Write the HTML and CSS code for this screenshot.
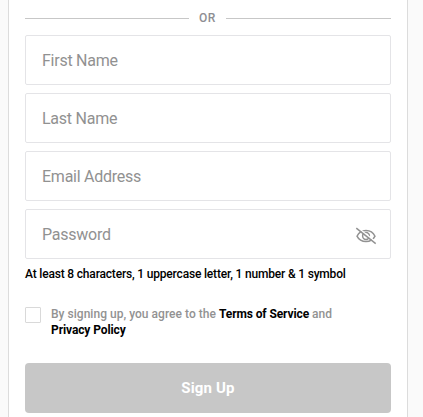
FILE: index.html
```
<!DOCTYPE html>
<html lang="en">
    <head>
        <meta charset="utf-8">
        <title>Sign Up</title>
        <link rel="stylesheet" href="styles.css">
    </head>
    <body>
        <form class="signup" onsubmit="return false">
            <div class="divider"><span class="or">OR</span></div>
            <div class="fields">
                <input class="field first" type="text" name="firstname" placeholder="First Name">
                <input class="field last" type="text" name="lastname" placeholder="Last Name">
                <input class="field email" type="email" name="email" placeholder="Email Address">
                <div class="field password">
                    <input class="password-input" type="password" name="password" placeholder="Password">
                    <svg class="eye" width="22" height="18" viewBox="0 0 22 18">
                        <path class="lid" d="M2 9.2C5.6 1.6 16.4 1.6 20 9.2C16.4 16.4 5.6 16.4 2 9.2Z"/>
                        <circle class="lid" cx="11" cy="9" r="3.4"/>
                        <path class="gap" d="M2.3 0.4L21.4 15.4"/>
                        <path class="slash" d="M1.3 1.2L20.7 16.6"/>
                    </svg>
                </div>
            </div>
            <p class="hint">At least 8 characters, 1 uppercase letter, 1 number &amp; 1 symbol</p>
            <div class="terms">
                <input class="checkbox" id="agree" type="checkbox" name="agree">
                <label class="agree" for="agree"><span class="agree-text">By signing up, you agree to the</span> <a class="tos">Terms of Service</a> <span class="and">and</span><br><a class="privacy">Privacy Policy</a></label>
            </div>
            <button class="submit"><span class="submit-text">Sign Up</span></button>
        </form>
    </body>
</html>
```
FILE: styles.css
```
*{
    box-sizing: border-box;
}
body{
    margin: 0;
    background: #fafafa;
    font-family: Roboto, "Liberation Sans", sans-serif;
    overflow: hidden;
}
.signup{
    width: 400px;
    height: 417px;
    margin-left: 8px;
    padding: 10px 16px 0;
    background: white;
    border: 1px solid #dcdcdc;
    border-top: 0;
    border-bottom: 0;
}
.divider{
    display: flex;
    align-items: center;
    gap: 10px;
    height: 16px;
    color: #8e8e93;
    font-size: 12px;
    font-weight: 500;
    line-height: 16px;
}
.or{
    letter-spacing: 0.6px;
}
.divider:before, .divider:after{
    content: "";
    flex: 1;
    height: 1px;
    background: #c7c7c7;
}
.divider:after{
    flex: 0 0 165px;
}
.fields{
    display: flex;
    flex-direction: column;
    gap: 8px;
    margin-top: 9px;
}
.field{
    width: 100%;
    height: 50px;
    padding: 0 16px;
    background: white;
    border: 1px solid #e4e4e7;
    border-radius: 2px;
    font: 16px Roboto, "Liberation Sans", sans-serif;
    letter-spacing: -0.25px;
    outline: 0;
}
.password{
    display: flex;
    align-items: center;
    justify-content: space-between;
    padding-right: 13px;
}
.password-input{
    width: 200px;
    height: 48px;
    padding: 0;
    border: 0;
    font: inherit;
    letter-spacing: inherit;
    outline: 0;
}
::placeholder{
    color: #919191;
    opacity: 1;
}
.eye{
    margin-top: 4px;
    fill: none;
    stroke: #929292;
    stroke-width: 1.5;
}
.gap{
    stroke: white;
}
.hint{
    margin: 7px 0 0;
    color: black;
    font-size: 12px;
    font-weight: 500;
    line-height: 16px;
    letter-spacing: -0.18px;
    white-space: nowrap;
}
.terms{
    display: flex;
    gap: 10px;
    margin-top: 24px;
}
.checkbox{
    appearance: none;
    width: 16px;
    height: 16px;
    margin: 1px 0 0;
    background: white;
    border: 1px solid #d9d9d9;
    border-radius: 1px;
}
.agree{
    color: #929292;
    font-size: 12px;
    font-weight: 500;
    line-height: 16px;
    letter-spacing: 0.03px;
    white-space: nowrap;
}
.tos, .privacy{
    color: black;
    font-weight: 700;
    letter-spacing: -0.1px;
}
.submit{
    display: block;
    width: 100%;
    height: 50px;
    margin-top: 25px;
    background: #c7c7c7;
    color: white;
    border: 0;
    border-radius: 4px;
    font: 700 15px Roboto, "Liberation Sans", sans-serif;
    letter-spacing: 0.15px;
}
```
